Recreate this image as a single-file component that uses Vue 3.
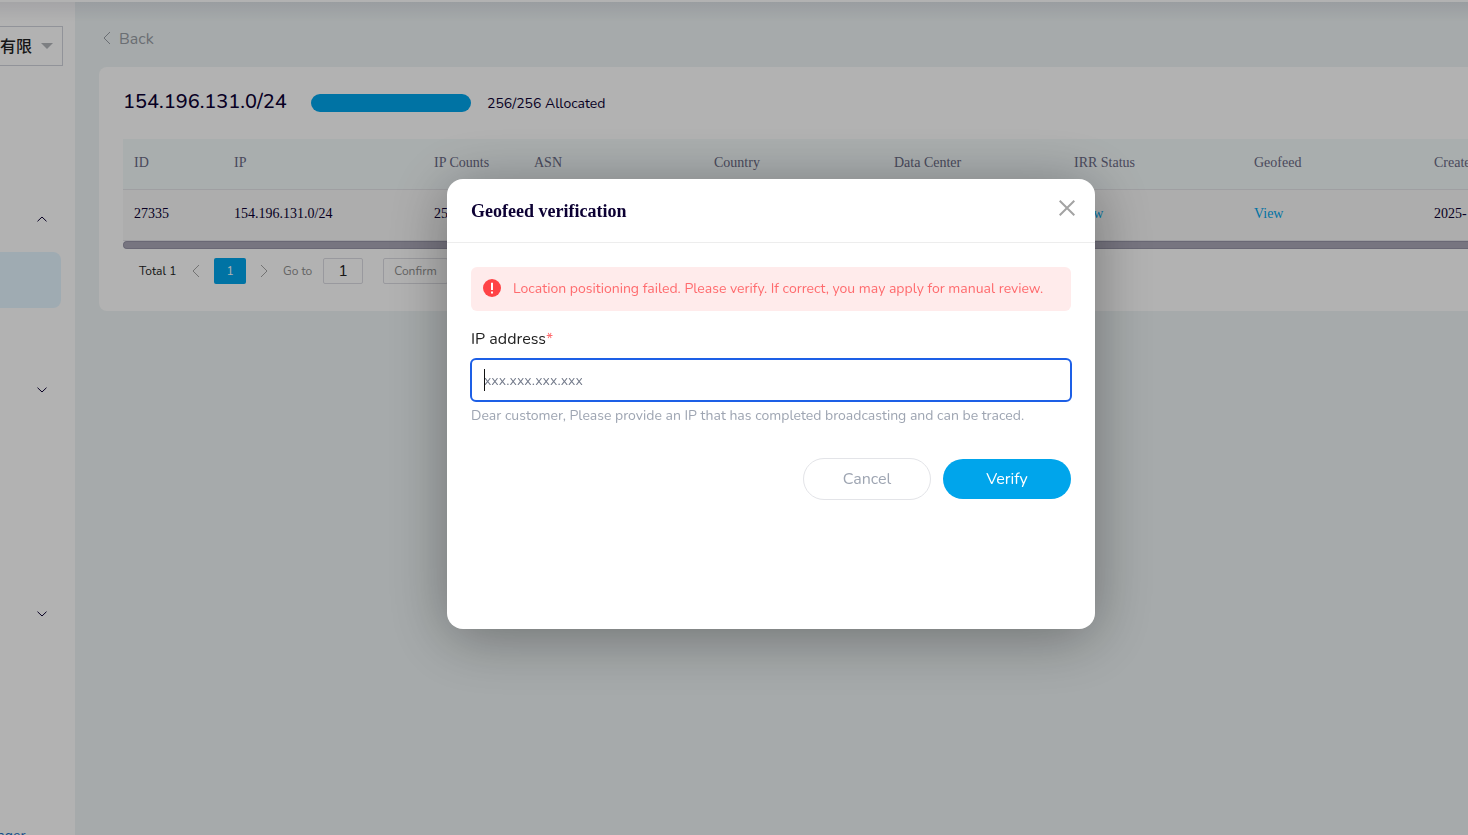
<script setup>
import { ref, onMounted } from 'vue'

const company = ref('有限')
const groups = [
  { name: 'services', open: true },
  { name: 'billing', open: false },
  { name: 'account', open: false },
]
const columns = ['ID', 'IP', 'IP Counts', 'ASN', 'Country', 'Data Center', 'IRR Status', 'Geofeed', 'Created Time']
const rows = [
  { id: '27335', ip: '154.196.131.0/24', counts: '256', asn: '', country: '', center: '', created: '2025-' },
]
const page = ref('1')
const address = ref('')
const field = ref(null)

onMounted(() => field.value.focus())
</script>

<template>
  <div class="app">
    <header class="topbar"></header>
    <aside class="sidebar">
      <div class="company">
        <select v-model="company" aria-label="Company">
          <option>有限</option>
        </select>
        <svg class="caret" viewBox="0 0 12 6" aria-hidden="true"><path d="M0 0h12L6 6z" /></svg>
      </div>
      <nav class="nav">
        <section v-for="g in groups" :key="g.name" class="group" :class="g.name">
          <button class="toggle" :aria-label="g.name" :aria-expanded="g.open">
            <svg viewBox="0 0 10 6" aria-hidden="true">
              <path :d="g.open ? 'M.5 5.300 5 1l4.500 4.300' : 'M.5.700 5 5 9.500.700'" />
            </svg>
          </button>
          <a v-if="g.open" class="active" href="#" aria-label="IP list"></a>
        </section>
      </nav>
      <a class="manager" href="#">Manager</a>
    </aside>

    <main class="main">
      <a class="back" href="#">
        <svg viewBox="0 0 8 14" aria-hidden="true"><path d="M7 1 1 7l6 6" /></svg>
        Back
      </a>
      <section class="card">
        <div class="summary">
          <h1>154.196.131.0/24</h1>
          <div class="bar"></div>
          <span>256/256 Allocated</span>
        </div>
        <div class="scroller">
          <table>
            <colgroup>
              <col class="w100" /><col class="w200" /><col class="w100" /><col class="w180" /><col class="w180" />
              <col class="w180" /><col class="w180" /><col class="w180" /><col class="w180" />
            </colgroup>
            <thead>
              <tr><th v-for="c in columns" :key="c">{{ c }}</th></tr>
            </thead>
            <tbody>
              <tr v-for="r in rows" :key="r.id">
                <td>{{ r.id }}</td>
                <td>{{ r.ip }}</td>
                <td>{{ r.counts }}</td>
                <td>{{ r.asn }}</td>
                <td>{{ r.country }}</td>
                <td>{{ r.center }}</td>
                <td><a href="#">View</a></td>
                <td><a href="#">View</a></td>
                <td>{{ r.created }}</td>
              </tr>
            </tbody>
          </table>
        </div>
        <div class="track"></div>
        <div class="pager">
          <span class="total">Total 1</span>
          <button class="arrow" aria-label="Previous page">
            <svg viewBox="0 0 8 14" aria-hidden="true"><path d="M7 1 1 7l6 6" /></svg>
          </button>
          <button class="current">1</button>
          <button class="arrow" aria-label="Next page">
            <svg viewBox="0 0 8 14" aria-hidden="true"><path d="m1 1 6 6-6 6" /></svg>
          </button>
          <label for="goto">Go to</label>
          <input id="goto" v-model="page" type="text" />
          <button class="confirm">Confirm</button>
        </div>
      </section>
    </main>

    <div class="overlay">
      <div class="dialog" role="dialog" aria-labelledby="dialog-title">
        <div class="head">
          <h2 id="dialog-title">Geofeed verification</h2>
          <button class="close" aria-label="Close">
            <svg viewBox="0 0 16 16" aria-hidden="true"><path d="m.700.700 14.600 14.600M15.300.700.700 15.300" /></svg>
          </button>
        </div>
        <form class="body" @submit.prevent>
          <div class="alert" role="alert">
            <svg viewBox="0 0 18 18" aria-hidden="true">
              <circle cx="9" cy="9" r="9" />
              <path d="M8 3.800h2v7.200H8zM8 12.600h2v1.800H8z" />
            </svg>
            <span>Location positioning failed. Please verify. If correct, you may apply for manual review.</span>
          </div>
          <label class="label" for="ip">IP address<em>*</em></label>
          <div class="field">
            <input id="ip" ref="field" v-model="address" type="text" placeholder="xxx.xxx.xxx.xxx" />
            <i class="cursor"></i>
          </div>
          <p class="hint">Dear customer, Please provide an IP that has completed broadcasting and can be traced.</p>
          <div class="actions">
            <button type="button" class="cancel">Cancel</button>
            <button type="submit" class="verify">Verify</button>
          </div>
        </form>
      </div>
    </div>
  </div>
</template>

<style>
body {
  margin: 0;
  overflow: hidden;
}
</style>

<style scoped>
.app {
  display: grid;
  grid-template-columns: 75px minmax(0, 1fr);
  grid-template-rows: 2px minmax(0, 1fr);
  height: 100vh;
  overflow: hidden;
  background: #eef4f5;
  font-family: Nunito, "Noto Sans", "Noto Sans CJK SC", sans-serif;
  color: #0c0033;
}
* {
  box-sizing: border-box;
}
a {
  text-decoration: none;
}
button,
input,
select {
  font-family: inherit;
  padding: 0;
  margin: 0;
}
button {
  background: none;
  border: 0;
}
svg {
  display: block;
  fill: none;
  stroke: currentColor;
}
.topbar {
  position: relative;
  grid-column: 1 / -1;
  background: #fff;
  z-index: 1;
}
.topbar::after {
  content: "";
  position: absolute;
  top: 100%;
  left: 0;
  right: 0;
  height: 20px;
  background: linear-gradient(rgba(12, 0, 51, 0.08), rgba(12, 0, 51, 0));
  pointer-events: none;
}
.sidebar {
  display: flex;
  flex-direction: column;
  background: #fff;
  overflow: hidden;
}
.company {
  position: relative;
  margin: 24px 12px 0 0;
}
.company select {
  display: block;
  width: 100%;
  height: 40px;
  padding-bottom: 2px;
  appearance: none;
  background: #fff;
  border: 1px solid #d0d3dc;
  border-left: 0;
  border-radius: 0;
  font-family: "Noto Sans CJK SC", sans-serif;
  font-size: 16px;
  font-weight: 500;
  color: #222;
}
.caret {
  position: absolute;
  right: 10px;
  top: 17px;
  width: 12px;
  height: 6px;
  fill: #b4b6bb;
  stroke: none;
}
.nav {
  flex: 1;
  padding-top: 138px;
}
.group {
  padding-right: 14px;
}
.group.services {
  height: 171px;
}
.group.billing {
  height: 224px;
}
.toggle {
  display: flex;
  justify-content: center;
  align-items: center;
  width: 20px;
  height: 30px;
  margin-left: 32px;
  color: #0c0033;
}
.toggle svg {
  width: 10px;
  height: 6px;
}
.active {
  display: block;
  height: 56px;
  margin-top: 18px;
  background: #e4f5ff;
  border-radius: 0 8px 8px 0;
}
.manager {
  align-self: flex-start;
  height: 7px;
  margin-left: -30px;
  font-size: 14px;
  line-height: 16px;
  color: #1f6fc4;
}
.main {
  padding: 24px 0 0 24px;
  overflow: hidden;
}
.back {
  display: flex;
  align-items: center;
  gap: 8px;
  height: 26px;
  padding-left: 4px;
  font-size: 16px;
  color: #999ea5;
}
.back svg {
  width: 8px;
  height: 14px;
  margin-bottom: 2px;
}
.card {
  margin-top: 15px;
  height: 244px;
  padding: 24px 0 0 24px;
  background: #fff;
  border-radius: 8px 0 0 8px;
}
.summary {
  display: flex;
  align-items: center;
  height: 24px;
  font-size: 14px;
}
.summary h1 {
  width: 188px;
  margin: 0;
  padding-bottom: 2px;
  font-size: 20px;
  line-height: 24px;
  font-weight: 500;
}
.bar {
  width: 160px;
  height: 18px;
  margin-right: 16px;
  background: #00a5eb;
  border-radius: 9px;
}
.scroller {
  margin-top: 24px;
  overflow: hidden;
}
table {
  width: 1480px;
  table-layout: fixed;
  border-collapse: separate;
  border-spacing: 0;
  font-family: "Liberation Serif", serif;
  font-size: 14px;
  text-align: left;
}
.w100 {
  width: 100px;
}
.w200 {
  width: 200px;
}
.w180 {
  width: 180px;
}
th,
td {
  height: 51px;
  padding: 0 10px 2px 11px;
  white-space: nowrap;
  border-bottom: 1px solid #e4e4e8;
}
th {
  background: #f3f9fa;
  font-weight: 400;
  color: #6a6a85;
}
td {
  background: #f8f8f8;
}
td a {
  color: #00a5eb;
}
.track {
  height: 8px;
  background: #aba8b8;
  border: 1px solid #9896a8;
  border-right: 0;
  border-radius: 4px 0 0 4px;
}
.pager {
  display: flex;
  align-items: center;
  height: 26px;
  margin-top: 9px;
  padding-left: 16px;
  font-size: 12px;
  color: #8e8e8e;
}
.total {
  width: 53px;
  color: #222;
}
.arrow {
  width: 8px;
  height: 14px;
  color: #a5a5a5;
}
.arrow svg {
  width: 8px;
  height: 14px;
}
.current {
  width: 32px;
  height: 26px;
  margin: 0 14px;
  background: #00a5eb;
  border-radius: 2px;
  font-size: 12px;
  color: #fff;
}
.pager label {
  width: 40px;
  margin-left: 15px;
}
.pager input {
  width: 40px;
  height: 26px;
  background: #fff;
  border: 1px solid #dcdce2;
  border-radius: 2px;
  font-size: 16px;
  text-align: center;
  color: #222;
}
.confirm {
  width: 65px;
  height: 26px;
  margin-left: 20px;
  border: 1px solid #dcdce2;
  border-radius: 2px;
  font-size: 12px;
  color: #8e8e8e;
}
.overlay {
  position: fixed;
  inset: 0;
  z-index: 2;
  display: flex;
  align-items: center;
  justify-content: center;
  padding: 0 0 27px 74px;
  background: rgba(0, 0, 0, 0.3);
}
.dialog {
  width: 648px;
  min-height: 450px;
  background: #fff;
  border-radius: 16px;
  box-shadow: 0 8px 60px rgba(0, 0, 0, 0.35);
}
.head {
  display: flex;
  align-items: center;
  justify-content: space-between;
  height: 64px;
  padding: 0 20px 0 24px;
  border-bottom: 1px solid #ededed;
}
.head h2 {
  margin: 0;
  padding-top: 2px;
  font-family: "Liberation Serif", serif;
  font-size: 18px;
  font-weight: 700;
}
.close {
  width: 16px;
  height: 16px;
  margin-bottom: 6px;
  color: #a3a3a3;
}
.close svg {
  width: 16px;
  height: 16px;
  stroke-width: 2;
}
.body {
  display: flex;
  flex-direction: column;
  padding: 24px;
}
.alert {
  display: flex;
  align-items: center;
  gap: 12px;
  height: 44px;
  padding: 0 0 2px 12px;
  background: #ffebeb;
  border-radius: 6px;
  font-size: 14px;
  white-space: nowrap;
  color: #ff6b6e;
}
.alert svg {
  width: 18px;
  height: 18px;
  fill: #ff4346;
  stroke: none;
}
.alert path {
  fill: #fff;
}
.label {
  margin-top: 16px;
  font-size: 16px;
  line-height: 24px;
  color: #222;
}
.label em {
  font-style: normal;
  color: #ff6b6e;
}
.field {
  position: relative;
  margin: 7px -1px 0;
}
.field input {
  display: block;
  width: 100%;
  height: 44px;
  padding: 0 12px;
  border: 2px solid #1d5fe6;
  border-radius: 6px;
  outline: 0;
  background: #fff;
  font-size: 14px;
  color: #222;
  caret-color: transparent;
}
.field input::placeholder {
  color: #747b8b;
  opacity: 1;
}
.cursor {
  position: absolute;
  left: 14px;
  top: 11px;
  width: 1px;
  height: 22px;
  background: #111;
}
.hint {
  margin: 4px 0 0;
  font-size: 14px;
  line-height: 20px;
  white-space: nowrap;
  color: #9ea5b2;
}
.actions {
  display: flex;
  justify-content: flex-end;
  align-items: center;
  gap: 12px;
  margin-top: 32px;
}
.actions button {
  width: 128px;
  height: 40px;
  border-radius: 21px;
  font-size: 16px;
}
.actions .cancel {
  height: 42px;
  border: 1px solid #e3e4e8;
  color: #9ea5b2;
}
.actions .verify {
  background: #00a5eb;
  color: #fff;
}
</style>
